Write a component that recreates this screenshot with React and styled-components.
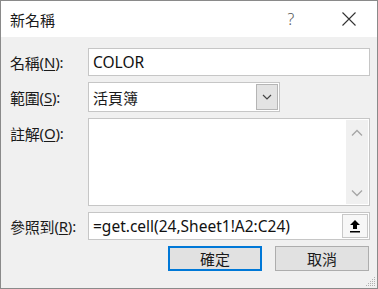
import React from "react";
import styled, { createGlobalStyle } from "styled-components";

const Global = createGlobalStyle`
  html, body { margin: 0; padding: 0; background: #f0f0f0; }
  * { box-sizing: border-box; }
`;

const cjk = `"Noto Sans CJK TC", "Noto Sans", sans-serif`;
const latin = `"Noto Sans", "Noto Sans CJK TC", sans-serif`;

const Window = styled.div`
  width: 378px;
  height: 289px;
  border: 1px solid #8a8a8a;
  background: #f0f0f0;
  display: flex;
  flex-direction: column;
  position: relative;
  font-family: ${cjk};
  color: #1a1a1a;
`;

const TitleBar = styled.div`
  height: 36px;
  background: #ffffff;
  display: flex;
  align-items: center;
  padding: 0 8px 0 9px;
  gap: 18px;
`;

const Title = styled.div`
  flex: 1;
  font-size: 15px;
  line-height: 1;
  margin-top: 1px;
`;

const TitleButton = styled.div`
  width: 40px;
  height: 36px;
  display: flex;
  align-items: center;
  justify-content: center;
  color: #555;
  font-family: ${latin};
  font-size: 16px;
  font-weight: 300;
`;

const Body = styled.div`
  flex: 1;
  display: grid;
  grid-template-columns: 78px 282px;
  grid-template-rows: 28px 30px 88px 28px 25px;
  row-gap: 6px;
  padding: 11px 6px 0 9px;
  align-content: start;
`;

const Label = styled.div`
  font-size: 15px;
  display: flex;
  align-items: ${(p) => (p.$top ? "flex-start" : "center")};
  padding-top: ${(p) => (p.$top ? "5px" : "0")};
  white-space: nowrap;
  letter-spacing: -0.2px;
  u { text-decoration: underline; text-underline-offset: 2px; }
`;

const Paren = styled.span`
  font-family: ${latin};
  font-size: 15px;
`;

const TextField = styled.div`
  border: 1px solid #c6c6c6;
  background: #fff;
  display: flex;
  align-items: center;
  padding-left: 4px;
  font-family: ${latin};
  font-size: 15.5px;
  color: #111;
  position: relative;
`;

const FieldText = styled.span`
  flex: 1;
  white-space: nowrap;
`;

const Select = styled.div`
  width: 192px;
  border: 1px solid #c6c6c6;
  background: #fff;
  display: flex;
  align-items: stretch;
  padding: 1px;
`;

const SelectText = styled.span`
  flex: 1;
  display: flex;
  align-items: center;
  padding-left: 3px;
  font-size: 15px;
`;

const DropButton = styled.div`
  width: 22px;
  background: #e3e3e3;
  border: 1px solid #b5b5b5;
  display: flex;
  align-items: center;
  justify-content: center;
`;

const TextArea = styled.div`
  border: 1px solid #c6c6c6;
  background: #fff;
  display: flex;
  justify-content: flex-end;
  padding: 1px;
`;

const ScrollBar = styled.div`
  width: 22px;
  background: #f0f0f0;
  display: flex;
  flex-direction: column;
  justify-content: space-between;
  align-items: center;
  padding: 9px 0 7px;
`;

const RefButton = styled.div`
  width: 26px;
  align-self: stretch;
  margin: 1px;
  border: 1px solid #c8c8c8;
  background: #f7f7f7;
  display: flex;
  align-items: center;
  justify-content: center;
`;

const Buttons = styled.div`
  grid-column: 1 / 3;
  display: flex;
  justify-content: flex-end;
  gap: 13px;
  padding-right: 1px;
`;

const Button = styled.div`
  width: 94px;
  height: 25px;
  background: #e1e1e1;
  border: ${(p) => (p.$default ? "2px solid #0078d7" : "1px solid #adadad")};
  display: flex;
  align-items: center;
  justify-content: center;
  font-size: 15px;
`;

const Grip = styled.svg`
  position: absolute;
  right: 1px;
  bottom: 1px;
`;

const Chevron = ({ up, color = "#a6a6a6" }) => (
  <svg width="12" height="8" viewBox="0 0 12 8">
    <path
      d={up ? "M1 6.5 L6 1.5 L11 6.5" : "M1 1.5 L6 6.5 L11 1.5"}
      fill="none"
      stroke={color}
      strokeWidth="1.3"
    />
  </svg>
);

export default function App() {
  return (
    <>
      <Global />
      <Window>
        <TitleBar>
          <Title>新名稱</Title>
          <TitleButton>?</TitleButton>
          <TitleButton>
            <svg width="14" height="14" viewBox="0 0 14 14">
              <path d="M0.5 0.5 L13.5 13.5 M13.5 0.5 L0.5 13.5" stroke="#333" strokeWidth="1.1" />
            </svg>
          </TitleButton>
        </TitleBar>
        <Body>
          <Label>
            名稱<Paren>(<u>N</u>):</Paren>
          </Label>
          <TextField>
            <FieldText>COLOR</FieldText>
          </TextField>

          <Label>
            範圍<Paren>(<u>S</u>):</Paren>
          </Label>
          <Select>
            <SelectText>活頁簿</SelectText>
            <DropButton>
              <svg width="10" height="6" viewBox="0 0 10 6">
                <path d="M1 1 L5 5 L9 1" fill="none" stroke="#444" strokeWidth="1.2" />
              </svg>
            </DropButton>
          </Select>

          <Label $top>
            註解<Paren>(<u>O</u>):</Paren>
          </Label>
          <TextArea>
            <ScrollBar>
              <Chevron up />
              <Chevron />
            </ScrollBar>
          </TextArea>

          <Label>
            參照到<Paren>(<u>R</u>):</Paren>
          </Label>
          <TextField>
            <FieldText>=get.cell(24,Sheet1!A2:C24)</FieldText>
            <RefButton>
              <svg width="12" height="14" viewBox="0 0 12 14">
                <path d="M6 1 L11 6 L8 6 L8 10 L4 10 L4 6 L1 6 Z" fill="#000" />
                <rect x="1" y="12" width="10" height="1.5" fill="#000" />
              </svg>
            </RefButton>
          </TextField>

          <Buttons>
            <Button $default>確定</Button>
            <Button>取消</Button>
          </Buttons>
        </Body>
        <Grip width="11" height="11" viewBox="0 0 11 11">
          <g fill="#b0b0b0">
            <rect x="9" y="1" width="1" height="1" />
            <rect x="7" y="3" width="1" height="1" />
            <rect x="9" y="3" width="1" height="1" />
            <rect x="5" y="5" width="1" height="1" />
            <rect x="7" y="5" width="1" height="1" />
            <rect x="9" y="5" width="1" height="1" />
            <rect x="3" y="7" width="1" height="1" />
            <rect x="5" y="7" width="1" height="1" />
            <rect x="7" y="7" width="1" height="1" />
            <rect x="9" y="7" width="1" height="1" />
            <rect x="1" y="9" width="1" height="1" />
            <rect x="3" y="9" width="1" height="1" />
            <rect x="5" y="9" width="1" height="1" />
            <rect x="7" y="9" width="1" height="1" />
            <rect x="9" y="9" width="1" height="1" />
          </g>
        </Grip>
      </Window>
    </>
  );
}
